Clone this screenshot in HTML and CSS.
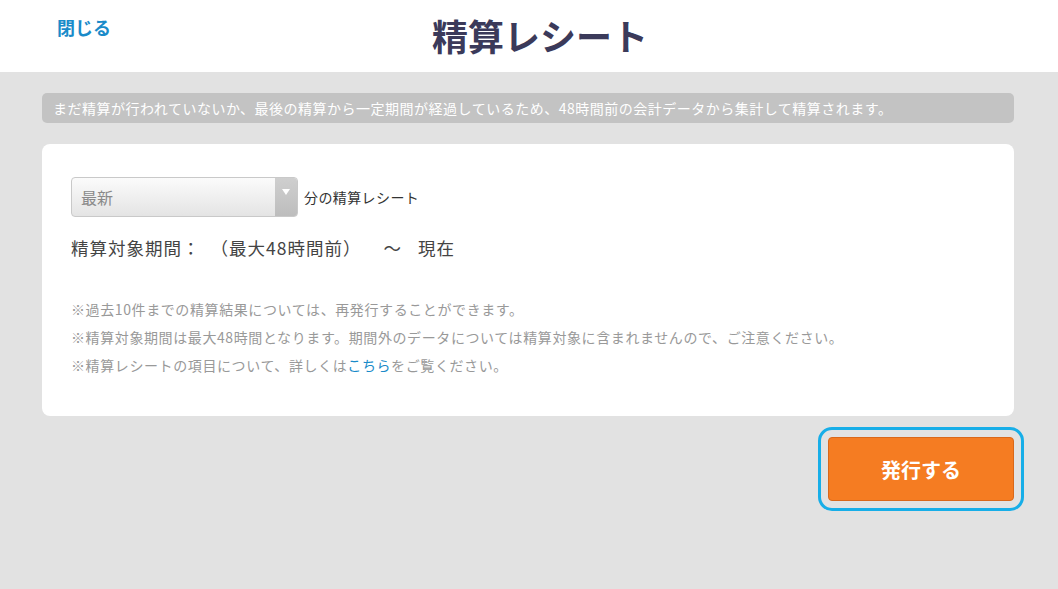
FILE: index.html
```html
<!DOCTYPE html>
<html lang="ja">
<head>
<meta charset="utf-8">
<title>精算レシート</title>
<link rel="stylesheet" href="styles.css">
</head>
<body>
<header class="header">
  <a class="close" href="#">閉じる</a>
  <h1 class="title">精算レシート</h1>
  <div class="spacer"></div>
</header>
<main class="main">
  <div class="notice">まだ精算が行われていないか、最後の精算から一定期間が経過しているため、48時間前の会計データから集計して精算されます。</div>
  <section class="card">
    <div class="select-row">
      <div class="select">
        <span class="select-value">最新</span>
        <span class="select-arrow"><svg width="8" height="6" viewBox="0 0 8 6"><path d="M0 0H8L4 6Z" fill="#fff"/></svg></span>
      </div>
      <span class="select-label">分の精算レシート</span>
    </div>
    <div class="period">
      <span>精算対象期間：</span><span class="from">（最大48時間前）</span><span class="tilde">～</span><span>現在</span>
    </div>
    <ul class="notes">
      <li>※過去10件までの精算結果については、再発行することができます。</li>
      <li>※精算対象期間は最大48時間となります。期間外のデータについては精算対象に含まれませんので、ご注意ください。</li>
      <li>※精算レシートの項目について、詳しくは<a href="#" class="link">こちら</a>をご覧ください。</li>
    </ul>
  </section>
  <div class="actions">
    <button class="issue" type="button">発行する</button>
  </div>
</main>
</body>
</html>
```
FILE: styles.css
```css
* { box-sizing: border-box; }
html, body { margin: 0; padding: 0; }
body {
  font-family: "Noto Sans CJK JP", "Noto Sans", sans-serif;
  background: #e2e2e2;
  width: 1058px;
  height: 589px;
  overflow: hidden;
  color: #333;
}
.header {
  background: #fff;
  height: 72px;
  display: grid;
  grid-template-columns: 1fr auto 1fr;
  align-items: start;
  padding: 0 57px;
}
.close {
  color: #1a8bc9;
  font-weight: bold;
  font-size: 18px;
  line-height: 24px;
  text-decoration: none;
  padding-top: 15px;
  justify-self: start;
}
.title {
  margin: 0 0 0 22px;
  font-size: 36px;
  line-height: 40px;
  padding-top: 15px;
  font-weight: bold;
  color: #3b3a5a;
}
.main {
  padding: 21px 44px 0 42px;
}
.notice {
  background: #c3c3c3;
  color: #fff;
  font-size: 14px;
  letter-spacing: 0.5px;
  line-height: 30px;
  height: 30px;
  border-radius: 5px;
  padding: 0 11px;
  white-space: nowrap;
}
.card {
  margin-top: 21px;
  background: #fff;
  border-radius: 8px;
  height: 272px;
  padding: 33px 29px 0 29px;
}
.select-row {
  display: flex;
  align-items: center;
  gap: 6px;
}
.select {
  width: 227px;
  height: 40px;
  border: 1px solid #c9c9c9;
  border-radius: 4px;
  background: linear-gradient(#fbfbfb, #e4e4e4);
  display: flex;
  overflow: hidden;
}
.select-value {
  flex: 1;
  padding-left: 9px;
  font-size: 16px;
  line-height: 38px;
  color: #8a8a8a;
}
.select-arrow {
  width: 22px;
  background: linear-gradient(#cfcfcf, #bdbdbd);
  display: flex;
  justify-content: center;
  padding-top: 11px;
}
.select-arrow svg { display: block; }
.select-label {
  font-size: 14px;
  letter-spacing: 0.4px;
  color: #333;
}
.period {
  margin-top: 18px;
  font-size: 17.5px;
  letter-spacing: 1px;
  line-height: 26px;
  color: #444;
  display: flex;
}
.from { margin-left: 10px; }
.tilde { margin: 0 16px 0 22px; }
.notes {
  list-style: none;
  margin: 34px 0 0 0;
  padding: 0;
  font-size: 14px;
  letter-spacing: 0.6px;
  line-height: 28px;
  color: #999;
}
.link {
  color: #1a8bc9;
  text-decoration: none;
}
.actions {
  display: flex;
  justify-content: flex-end;
  margin-top: 21px;
}
.issue {
  width: 186px;
  height: 64px;
  background: #f57c22;
  border: 1px solid #d9681a;
  border-radius: 4px;
  color: #fff;
  font-family: inherit;
  font-size: 20px;
  font-weight: bold;
  outline: 3px solid #17aee8;
  outline-offset: 7px;
  padding: 0;
}
```
